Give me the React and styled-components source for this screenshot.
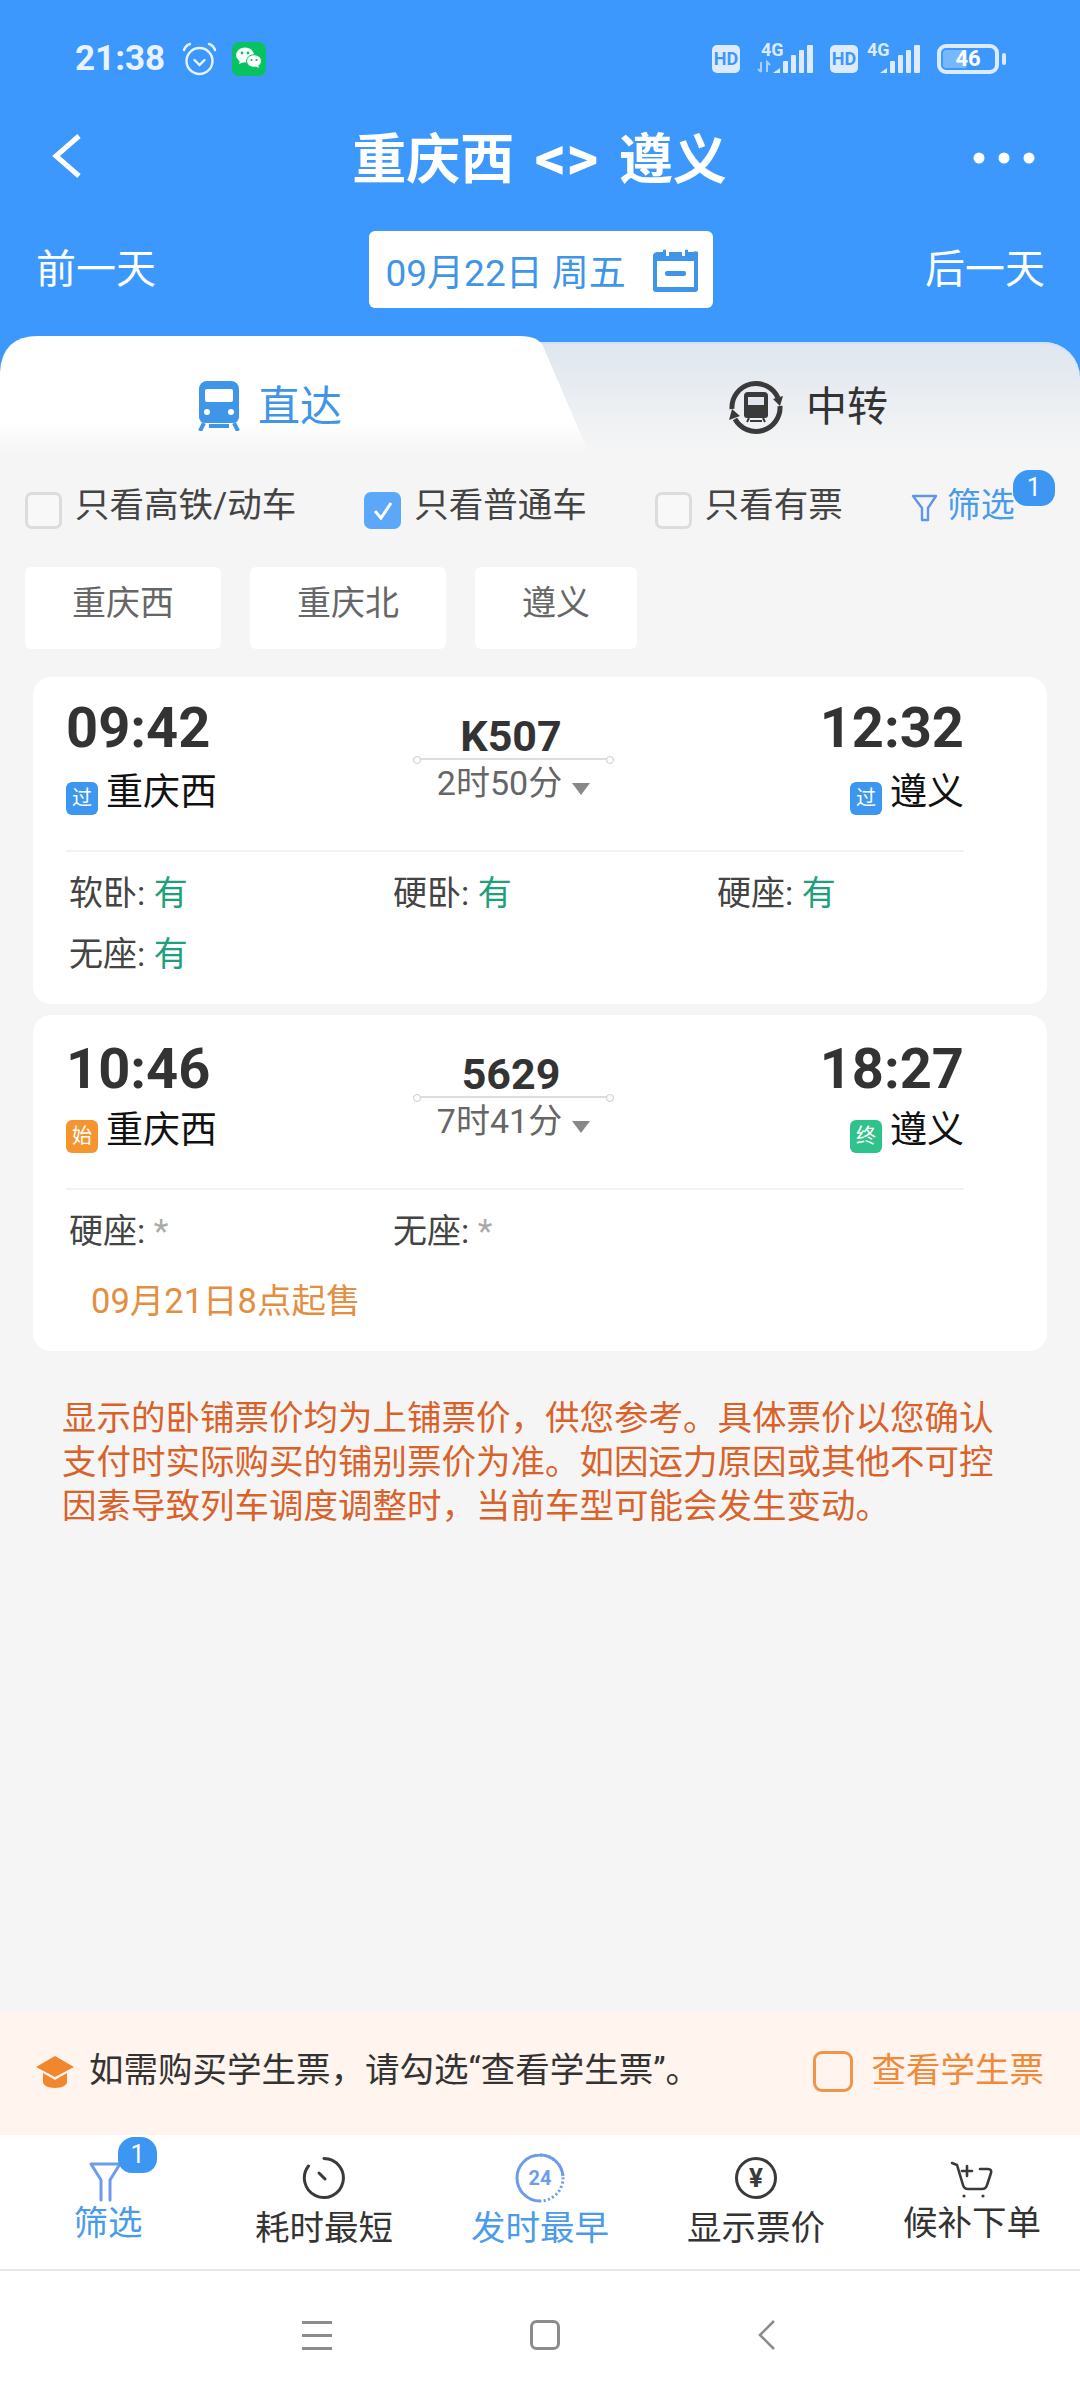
import React from 'react';
import styled, { createGlobalStyle } from 'styled-components';

const BLUE = '#3d98fd';

const GlobalStyle = createGlobalStyle`
  * { box-sizing: border-box; }
  html, body { margin: 0; padding: 0; background: #f5f5f5; }
  body { font-family: Roboto, "Noto Sans CJK SC", sans-serif; }
`;

const Page = styled.div`
  width: 1080px;
  height: 2400px;
  display: flex;
  flex-direction: column;
  overflow: hidden;
  background: #f5f5f5;
`;

// Blue header
const Header = styled.header`
  background: ${BLUE};
  color: #fff;
  height: 336px;
`;

const StatusBar = styled.div`
  height: 118px;
  padding: 42px 74px 0 75px;
  display: flex;
  align-items: flex-start;
`;

const Clock = styled.span`
  font-size: 35px;
  font-weight: 700;
  line-height: 34px;
  color: #e9f3ff;
  margin-right: 17px;
`;

const StatusRight = styled.div`
  margin-left: auto;
  display: flex;
  align-items: flex-start;
  padding-top: 2px;
  padding-right: 7px;
`;

const HdBadge = styled.span`
  width: 28px;
  height: 28px;
  margin-top: 1px;
  margin-right: ${p => p.$gap}px;
  border-radius: 5px;
  background: #dcebff;
  color: ${BLUE};
  font-size: 18px;
  font-weight: 700;
  line-height: 28px;
  text-align: center;
`;

const SignalGap = styled.span`
  width: 16px;
`;

const Battery = styled.span`
  position: relative;
  width: 62px;
  height: 30px;
  margin-left: 16px;
  border: 4px solid #dcebff;
  border-radius: 9px;
  color: #fff;
  font-size: 22px;
  font-weight: 700;
  line-height: 22px;
  text-align: center;
  &::before {
    content: '';
    position: absolute;
    left: 2px;
    top: 2px;
    bottom: 2px;
    width: 24px;
    border-radius: 3px;
    background: rgba(255, 255, 255, 0.3);
  }
  &::after {
    content: '';
    position: absolute;
    right: -11px;
    top: 5px;
    width: 4px;
    height: 12px;
    border-radius: 2px;
    background: #dcebff;
  }
`;

const BatteryText = styled.span`
  position: relative;
`;

const TitleRow = styled.div`
  height: 82px;
  padding: 0 45px 0 52px;
  display: grid;
  grid-template-columns: 1fr auto 1fr;
  align-items: center;
`;

const BackIcon = styled.svg`
  margin-top: -6px;
`;

const Title = styled.h1`
  margin: 2px 8px 0 0;
  font-size: 54px;
  font-weight: 700;
  line-height: 60px;
  word-spacing: 7px;
  color: #fff;
`;

const TitleArrows = styled.span`
  font-size: 62px;
  line-height: 56px;
`;

const Dots = styled.svg`
  justify-self: end;
  margin-top: -2px;
`;

const DateRow = styled.div`
  margin-top: 31px;
  padding: 0 35px 0 36px;
  display: flex;
  align-items: center;
  justify-content: space-between;
`;

const DayLink = styled.span`
  font-size: 40px;
  line-height: 50px;
  color: #fff;
`;

const DatePicker = styled.div`
  width: 344px;
  height: 77px;
  padding: 0 15px 0 17px;
  background: #fff;
  border-radius: 6px;
  display: flex;
  align-items: center;
  justify-content: space-between;
  color: #3f95e8;
  font-size: 37px;
`;

// Direct / transfer tabs
const TabBar = styled.div`
  height: 120px;
  display: flex;
  background: linear-gradient(${BLUE} 40px, #f5f5f5 40px);
`;

const DirectTab = styled.div`
  width: 590px;
  height: 120px;
  flex: none;
  position: relative;
  z-index: 1;
  padding: 43px 0 0 198px;
  display: flex;
  align-items: flex-start;
  gap: 18px;
  color: #3f95e8;
  font-size: 42px;
  line-height: 56px;
  background: linear-gradient(#fff 85px, #f5f5f5 118px);
  clip-path: path('M0 120 L0 36 Q2 0 38 0 L520 0 Q538 0 543 10 L590 120 Z');
`;

const TransferTab = styled.div`
  flex: 1;
  margin-left: -70px;
  margin-top: 6px;
  height: 114px;
  padding: 39px 0 0 208px;
  display: flex;
  align-items: flex-start;
  gap: 22px;
  color: #333;
  font-size: 41px;
  line-height: 52px;
  border-top-right-radius: 36px;
  background: linear-gradient(#dfe6ef, #f5f5f5 95%);
  box-shadow: inset 0 2px 0 #cfe2fb;
`;

// Filter row
const FilterRow = styled.div`
  height: 111px;
  padding: 0 0 13px 25px;
  display: flex;
  align-items: center;
  gap: 68px;
`;

const Check = styled.label`
  display: flex;
  align-items: center;
  gap: 13px;
  font-size: 34.5px;
  line-height: 40px;
  color: #444;
`;

const Box = styled.span`
  width: 37px;
  height: 37px;
  margin-top: 11px;
  border-radius: 7px;
  display: flex;
  align-items: center;
  justify-content: center;
  border: ${p => (p.$on ? 'none' : '3px solid #dcdcdc')};
  background: ${p => (p.$on ? '#5ba8fb' : '#f8f8f8')};
`;

const FilterLink = styled.div`
  position: relative;
  display: flex;
  align-items: center;
  gap: 9px;
  font-size: 34px;
  line-height: 40px;
  color: #4a9bea;
`;

const CountBadge = styled.span`
  position: absolute;
  width: ${p => p.$size}px;
  height: 36px;
  right: ${p => p.$right}px;
  top: ${p => p.$top}px;
  border-radius: 16px 16px 14px 14px;
  background: #3d96f2;
  color: #fff;
  font-size: 25px;
  line-height: 36px;
  text-align: center;
`;

const ChipRow = styled.div`
  padding-left: 25px;
  display: flex;
  gap: 29px;
`;

const Chip = styled.div`
  height: 82px;
  padding: 0 47px;
  background: #fff;
  border-radius: 6px;
  color: #666;
  font-size: 34px;
  line-height: 72px;
`;

// Train cards
const Cards = styled.div`
  margin-top: 28px;
  padding: 0 33px;
  display: flex;
  flex-direction: column;
  gap: 11px;
`;

const Card = styled.article`
  height: ${p => p.$height}px;
  padding: 20px 83px 0 33px;
  background: #fff;
  border-radius: 18px;
`;

const TrainRow = styled.div`
  height: 155px;
  display: grid;
  grid-template-columns: 1fr auto 1fr;
  border-bottom: 2px solid #f2f2f2;
`;

const Stop = styled.div`
  display: flex;
  flex-direction: column;
  align-items: ${p => (p.$end ? 'flex-end' : 'flex-start')};
`;

const Time = styled.div`
  height: 60px;
  margin-top: ${p => (p.$drop || 0) + 1}px;
  margin-bottom: ${p => -(p.$drop || 0) - 1}px;
  font-size: 56px;
  font-weight: 700;
  line-height: 60px;
  color: #333;
`;

const Station = styled.div`
  margin-top: 11px;
  display: flex;
  align-items: center;
  gap: 8px;
  font-size: 37px;
  line-height: 50px;
  color: #111;
`;

const StopBadge = styled.span`
  width: 32px;
  height: 33px;
  margin-top: 10px;
  border-radius: 6px;
  background: ${p => p.$color};
  color: #fff;
  font-size: 20px;
  line-height: 33px;
  text-align: center;
`;

const Middle = styled.div`
  padding: 18px 3px 0 0;
  display: flex;
  flex-direction: column;
  align-items: center;
`;

const TrainNo = styled.div`
  margin-right: 5px;
  font-size: 43px;
  font-weight: 700;
  line-height: 43px;
  color: #333;
`;

const RouteLine = styled.div`
  position: relative;
  width: 201px;
  height: 2px;
  background: #ddd;
  &::before,
  &::after {
    content: '';
    position: absolute;
    top: -2px;
    width: 6px;
    height: 6px;
    border-radius: 50%;
    border: 1px solid #ccc;
    background: #fff;
  }
  &::before { left: 0; }
  &::after { right: 0; }
`;

const Duration = styled.div`
  display: flex;
  align-items: center;
  font-size: 34px;
  line-height: 46px;
  color: #666;
`;

const Caret = styled.span`
  width: 0;
  height: 0;
  margin: 12px 0 0 10px;
  border-left: 9px solid transparent;
  border-right: 9px solid transparent;
  border-top: 12px solid #888;
`;

const Seats = styled.div`
  margin-top: 10px;
  padding-left: 3px;
  display: grid;
  grid-template-columns: repeat(3, 324px);
  grid-auto-rows: 61px;
  align-items: center;
`;

const Seat = styled.div`
  font-size: 34px;
  line-height: 40px;
  color: #444;
`;

const SeatValue = styled.span`
  color: ${p => (p.$open ? '#1f9f7a' : '#aaa')};
`;

const SaleNote = styled.div`
  margin: 20px 0 0 25px;
  font-size: 34.5px;
  line-height: 40px;
  color: #e38f3f;
`;

const Notice = styled.p`
  margin: 45px 0 0;
  padding: 0 62px;
  font-size: 34.5px;
  line-height: 44px;
  color: #d9622b;
`;

// Bottom area
const Spacer = styled.div`
  flex: 1;
`;

const StudentBar = styled.div`
  height: 123px;
  padding: 0 36px 8px 36px;
  display: flex;
  align-items: center;
  background: #fff4ee;
  font-size: 34.5px;
  line-height: 44px;
  color: #333;
`;

const StudentText = styled.span`
  margin-left: 15px;
`;

const StudentCheck = styled.label`
  margin-left: auto;
  display: flex;
  align-items: center;
  gap: 19px;
  color: #ef8a3b;
`;

const OrangeBox = styled.span`
  width: 40px;
  height: 41px;
  margin-top: 4px;
  border: 3px solid #f0944a;
  border-radius: 9px;
`;

const ActionBar = styled.nav`
  height: 136px;
  display: grid;
  grid-template-columns: repeat(5, 216px);
  background: #fff;
  border-bottom: 2px solid #e6e6e6;
`;

const Action = styled.div`
  position: relative;
  padding-top: 22px;
  display: flex;
  flex-direction: column;
  align-items: center;
  color: ${p => (p.$active ? '#4a9bea' : '#333')};
`;

const ActionIcon = styled.div`
  height: 42px;
  display: flex;
  align-items: center;
  justify-content: center;
`;

const ActionLabel = styled.span`
  margin-top: ${p => (p.$raised ? 9 : 14)}px;
  font-size: 34.5px;
  line-height: 30px;
`;

const NavBar = styled.div`
  height: 129px;
  padding: 49px 304px 0 302px;
  display: flex;
  align-items: flex-start;
  justify-content: space-between;
  background: #fff;
`;

// Drawings
const Signal = ({ label, arrows, width }) => (
  <svg width={width} height="30" viewBox={`0 0 ${width} 30`} style={{ display: 'block', overflow: 'visible' }}>
    <text x={arrows ? 4 : 0} y="12" fontFamily="Roboto" fontWeight="700" fontSize="18" fill="#dcebff">{label}</text>
    {arrows && <path d="M4 18v10M1 25l3 3M10 28V18l3 3" stroke="#a9d0ff" strokeWidth="2" fill="none" />}
    <g transform={`translate(${width - 41} 0)`} fill="#dcebff">
      <path d="M0 29 L7 24 V29 Z" />
      <rect x="10" y="17" width="5" height="12" rx="1" />
      <rect x="18" y="11" width="5" height="18" rx="1" />
      <rect x="26" y="6" width="5" height="23" rx="1" />
      <rect x="34" y="1" width="6" height="28" rx="1" />
    </g>
  </svg>
);

const AlarmIcon = () => (
  <svg width="35" height="34" viewBox="0 0 35 34" style={{ marginRight: 15 }} fill="none" stroke="#e9f3ff" strokeWidth="2.4">
    <circle cx="17.5" cy="19" r="13" />
    <path d="M12.5 18l5 5 5-5M2 8c1-3 3-5 6-6M33 8c-1-3-3-5-6-6" strokeLinecap="round" />
  </svg>
);

const WeChatIcon = () => (
  <svg width="34" height="34" viewBox="0 0 34 34">
    <rect width="34" height="34" rx="7" fill="#08c160" />
    <ellipse cx="13" cy="13" rx="9" ry="7.5" fill="#fff" />
    <path d="M8 18l-1 4 5-2z" fill="#fff" />
    <circle cx="10" cy="11" r="1.4" fill="#08c160" />
    <circle cx="16" cy="11" r="1.4" fill="#08c160" />
    <ellipse cx="22" cy="19" rx="7.5" ry="6.3" fill="#fff" stroke="#08c160" strokeWidth="1" />
    <path d="M26 23l1 3-4-2z" fill="#fff" />
    <circle cx="19.5" cy="18" r="1.1" fill="#08c160" />
    <circle cx="24.5" cy="18" r="1.1" fill="#08c160" />
  </svg>
);

const CalendarIcon = () => (
  <svg width="45" height="45" viewBox="0 0 45 45" fill="#3f95e8">
    <path d="M5 5h5v-2a3 3 0 0 1 3 0v6h3V5h13v4h3V3a3 3 0 0 1 3 0v2h5a5 5 0 0 1 5 0v37a3 3 0 0 1-3 3H3a3 3 0 0 1-3-3V8a5 5 0 0 1 5-3z" />
    <rect x="4" y="14" width="37" height="26" fill="#fff" />
    <rect x="12" y="24" width="21" height="5" rx="2" />
  </svg>
);

const TrainIcon = () => (
  <svg width="42" height="50" viewBox="0 0 42 50" style={{ marginTop: 2 }}>
    <path d="M9 0h24a8 8 0 0 1 8 8v28a6 6 0 0 1-6 6H7a6 6 0 0 1-6-6V8a8 8 0 0 1 8-8z" fill="#3f95e8" />
    <rect x="7" y="8" width="28" height="13" rx="2" fill="#fff" />
    <circle cx="9" cy="31" r="3" fill="#fff" />
    <circle cx="33" cy="31" r="3" fill="#fff" />
    <path d="M6 42L2 50M36 42l4 8M11 45h20" stroke="#3f95e8" strokeWidth="4" />
  </svg>
);

const TransferIcon = () => (
  <svg width="56" height="56" viewBox="0 0 56 56" style={{ marginTop: -2 }}>
    <path d="M4 30A24 24 0 0 1 50 19M52 27A24 24 0 0 1 7 40" fill="none" stroke="#3a3a3a" strokeWidth="5" />
    <path d="M55 17l-3 10-7-7zM1 41l3-11 8 7z" fill="#3a3a3a" />
    <path d="M20 13h16a4 4 0 0 1 4 4v19a3 3 0 0 1-3 3H19a3 3 0 0 1-3-3V17a4 4 0 0 1 4-4z" fill="#3a3a3a" />
    <rect x="20" y="18" width="16" height="8" fill="#dfe6ef" />
    <path d="M21 39l-2 4M35 39l2 4M22 42h12" stroke="#3a3a3a" strokeWidth="2" />
  </svg>
);

const CheckMark = () => (
  <svg width="22" height="22" viewBox="0 0 22 22" fill="none" stroke="#fff" strokeWidth="3">
    <path d="M3 11l6 7L19 3" />
  </svg>
);

const SmallFunnel = () => (
  <svg width="27" height="28" viewBox="0 0 27 28" fill="none" stroke="#5f95ea" strokeWidth="2.4" strokeLinejoin="round" style={{ marginTop: 6 }}>
    <path d="M2 2h23l-8 12v12h-6V14z" />
  </svg>
);

const CapIcon = () => (
  <svg width="38" height="32" viewBox="0 0 38 32" style={{ marginTop: 4 }} fill="#f0862e">
    <path d="M19 0l19 11-19 10L0 11z" />
    <path d="M7 17l12 7 12-7v9c0 3-5 6-12 6s-12-3-12-6z" />
  </svg>
);

const Funnel = () => (
  <svg width="33" height="40" viewBox="0 0 33 40" fill="none" stroke="#6c9cea" strokeWidth="3" strokeLinecap="round" strokeLinejoin="round" style={{ marginLeft: -6, marginTop: 8 }}>
    <path d="M2 2h29M2 2l10 16v20M31 2L21 18v20" />
  </svg>
);

const Timer = () => (
  <svg width="44" height="44" viewBox="0 0 44 44" fill="none" stroke="#3a3a3a" strokeWidth="3" strokeLinecap="round">
    <path d="M22 2.5A19.5 19.5 0 1 1 6.5 10" />
    <path d="M17 17l6 6" />
  </svg>
);

const EarlyIcon = () => (
  <svg width="50" height="50" viewBox="0 0 50 50" fill="none" stroke="#6c9cea" strokeWidth="3">
    <path d="M25 2a23 23 0 1 1 0 46" strokeDasharray="2 2.4" />
    <path d="M25 2a23 23 0 0 0 0 46M25 2a23 23 0 0 1 23 21" />
    <text x="25" y="32" textAnchor="middle" fontFamily="Roboto" fontWeight="700" fontSize="20" fill="#6c9cea" stroke="none">24</text>
  </svg>
);

const YuanIcon = () => (
  <svg width="44" height="44" viewBox="0 0 44 44" fill="none" stroke="#3a3a3a" strokeWidth="3">
    <circle cx="22" cy="22" r="19.5" />
    <text x="22" y="31" textAnchor="middle" fontFamily="Roboto" fontWeight="700" fontSize="26" fill="#3a3a3a" stroke="none">¥</text>
  </svg>
);

const CartIcon = () => (
  <svg width="44" height="38" viewBox="0 0 44 38" fill="none" stroke="#3a3a3a" strokeWidth="2.6" strokeLinecap="round" style={{ marginTop: 4 }}>
    <path d="M2 2l5 2 6 20q1 4 5 4h14q4 0 5-4l4-12q1-4-3-4h-8" />
    <path d="M17 5v10M12 10h10" />
    <circle cx="14" cy="35" r="1.6" fill="#3a3a3a" stroke="none" />
    <circle cx="33" cy="35" r="1.6" fill="#3a3a3a" stroke="none" />
  </svg>
);

// Data
const BADGE = { 过: '#3d97f0', 始: '#f5952f', 终: '#2fc28b' };

const trains = [
  {
    no: 'K507', from: '09:42', to: '12:32', duration: '2时50分', fromTag: '过', toTag: '过',
    seats: [['软卧', '有'], ['硬卧', '有'], ['硬座', '有'], ['无座', '有']],
    height: 327,
  },
  {
    no: '5629', from: '10:46', to: '18:27', duration: '7时41分', fromTag: '始', toTag: '终',
    seats: [['硬座', '*'], ['无座', '*']],
    note: '09月21日8点起售',
    height: 336,
    drop: 3,
  },
];

const TrainCard = ({ train }) => (
  <Card $height={train.height}>
    <TrainRow>
      <Stop>
        <Time $drop={train.drop}>{train.from}</Time>
        <Station>
          <StopBadge $color={BADGE[train.fromTag]}>{train.fromTag}</StopBadge>
          重庆西
        </Station>
      </Stop>
      <Middle>
        <TrainNo>{train.no}</TrainNo>
        <RouteLine />
        <Duration>{train.duration}<Caret /></Duration>
      </Middle>
      <Stop $end>
        <Time $drop={train.drop}>{train.to}</Time>
        <Station>
          <StopBadge $color={BADGE[train.toTag]}>{train.toTag}</StopBadge>
          遵义
        </Station>
      </Stop>
    </TrainRow>
    <Seats>
      {train.seats.map(([name, value]) => (
        <Seat key={name}>{name}: <SeatValue $open={value === '有'}>{value}</SeatValue></Seat>
      ))}
    </Seats>
    {train.note && <SaleNote>{train.note}</SaleNote>}
  </Card>
);

const App = () => {
  return (
    <Page>
      <GlobalStyle />
      <Header>
        <StatusBar>
          <Clock>21:38</Clock>
          <AlarmIcon />
          <WeChatIcon />
          <StatusRight>
            <HdBadge $gap={17}>HD</HdBadge>
            <Signal label="4G" arrows width={57} />
            <SignalGap />
            <HdBadge $gap={9}>HD</HdBadge>
            <Signal label="4G" width={54} />
            <Battery><BatteryText>46</BatteryText></Battery>
          </StatusRight>
        </StatusBar>
        <TitleRow>
          <BackIcon width="30" height="44" viewBox="0 0 30 44" fill="none" stroke="#fff" strokeWidth="5">
            <path d="M27 2L4 22l23 20" />
          </BackIcon>
          <Title>重庆西 <TitleArrows>&lt;&gt;</TitleArrows> 遵义</Title>
          <Dots width="62" height="12" viewBox="0 0 62 12" fill="#fff">
            <circle cx="6" cy="6" r="5.5" />
            <circle cx="31" cy="6" r="5.5" />
            <circle cx="56" cy="6" r="5.5" />
          </Dots>
        </TitleRow>
        <DateRow>
          <DayLink>前一天</DayLink>
          <DatePicker>09月22日 周五<CalendarIcon /></DatePicker>
          <DayLink>后一天</DayLink>
        </DateRow>
      </Header>

      <TabBar>
        <DirectTab><TrainIcon />直达</DirectTab>
        <TransferTab><TransferIcon />中转</TransferTab>
      </TabBar>

      <FilterRow>
        <Check><Box />只看高铁/动车</Check>
        <Check><Box $on><CheckMark /></Box>只看普通车</Check>
        <Check><Box />只看有票</Check>
        <FilterLink>
          <SmallFunnel />筛选
          <CountBadge $size={42} $right={-40} $top={-15}>1</CountBadge>
        </FilterLink>
      </FilterRow>

      <ChipRow>
        <Chip>重庆西</Chip>
        <Chip>重庆北</Chip>
        <Chip>遵义</Chip>
      </ChipRow>

      <Cards>
        {trains.map(train => <TrainCard key={train.no} train={train} />)}
      </Cards>

      <Notice>显示的卧铺票价均为上铺票价，供您参考。具体票价以您确认支付时实际购买的铺别票价为准。如因运力原因或其他不可控因素导致列车调度调整时，当前车型可能会发生变动。</Notice>

      <Spacer />

      <StudentBar>
        <CapIcon />
        <StudentText>如需购买学生票，请勾选“查看学生票”。</StudentText>
        <StudentCheck><OrangeBox />查看学生票</StudentCheck>
      </StudentBar>

      <ActionBar>
        <Action $active>
          <ActionIcon><Funnel /></ActionIcon>
          <ActionLabel $raised>筛选</ActionLabel>
          <CountBadge $size={39} $right={59} $top={2}>1</CountBadge>
        </Action>
        <Action>
          <ActionIcon><Timer /></ActionIcon>
          <ActionLabel>耗时最短</ActionLabel>
        </Action>
        <Action $active>
          <ActionIcon><EarlyIcon /></ActionIcon>
          <ActionLabel>发时最早</ActionLabel>
        </Action>
        <Action>
          <ActionIcon><YuanIcon /></ActionIcon>
          <ActionLabel>显示票价</ActionLabel>
        </Action>
        <Action>
          <ActionIcon><CartIcon /></ActionIcon>
          <ActionLabel $raised>候补下单</ActionLabel>
        </Action>
      </ActionBar>

      <NavBar>
        <svg width="30" height="30" viewBox="0 0 30 30" fill="#8c8c8c">
          <rect y="1" width="30" height="3" />
          <rect y="14" width="30" height="3" />
          <rect y="27" width="30" height="3" />
        </svg>
        <svg width="30" height="30" viewBox="0 0 30 30" fill="none" stroke="#8c8c8c" strokeWidth="3">
          <rect x="1.5" y="1.5" width="27" height="27" rx="5" />
        </svg>
        <svg width="18" height="30" viewBox="0 0 18 30" fill="none" stroke="#8c8c8c" strokeWidth="2.6">
          <path d="M16 1L2 15l14 14" />
        </svg>
      </NavBar>
    </Page>
  );
};

export default App;
